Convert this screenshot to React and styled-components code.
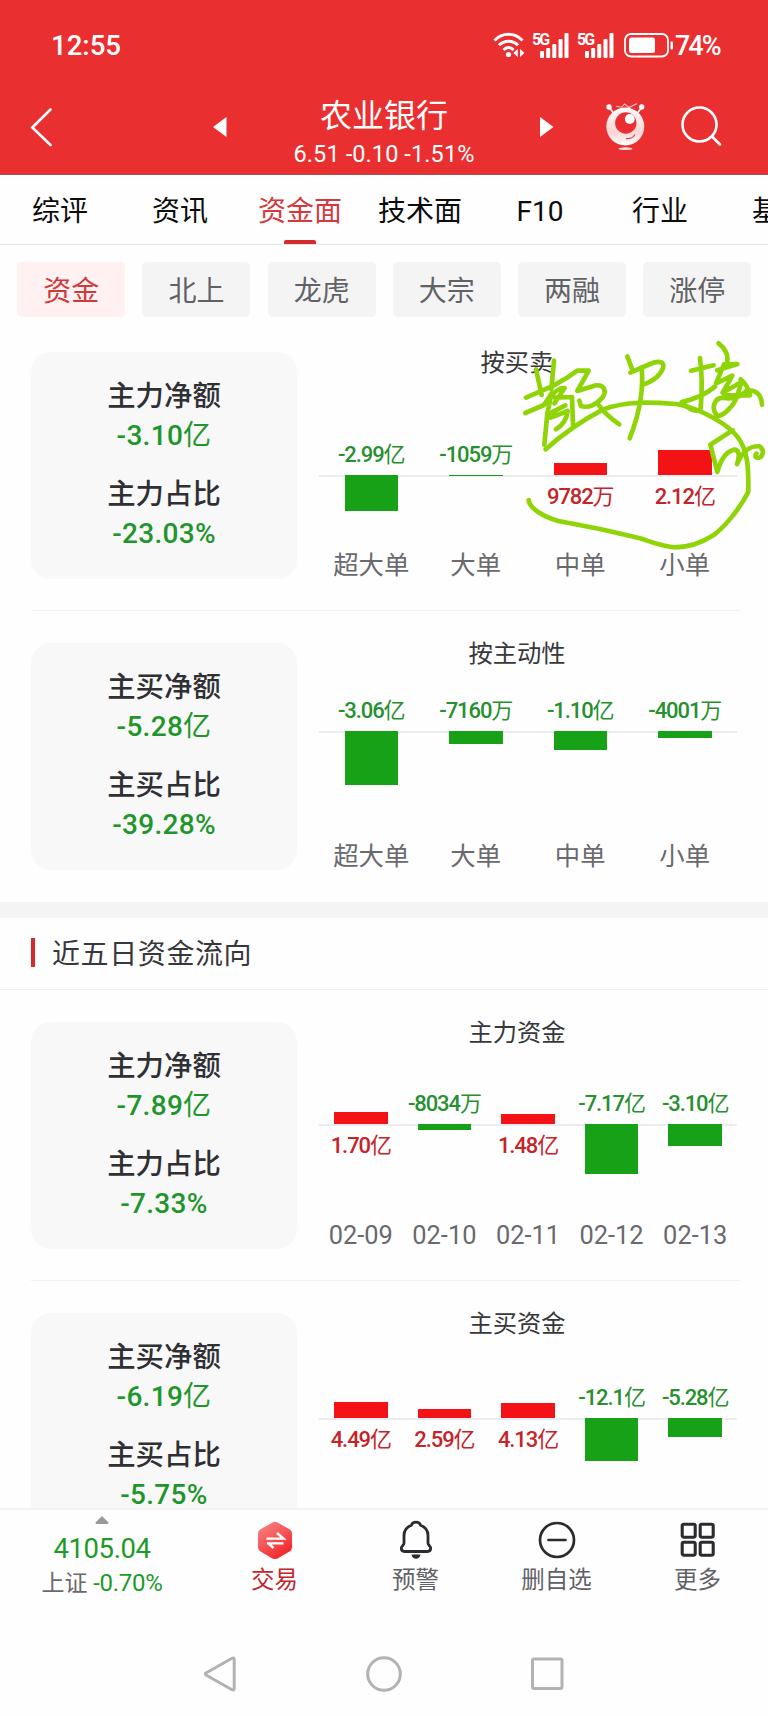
import styled, { createGlobalStyle } from "styled-components";

const tabs = ["综评", "资讯", "资金面", "技术面", "F10", "行业", "基金"];
const chips = ["资金", "北上", "龙虎", "大宗", "两融", "涨停"];

// bar: positive grows up (red), negative grows down (green)
const todayRows = [
  {
    title: "按买卖",
    axis: 155,
    stats: [
      { name: "主力净额", value: "-3.10亿" },
      { name: "主力占比", value: "-23.03%" },
    ],
    items: [
      { label: "超大单", value: "-2.99亿", bar: -36 },
      { label: "大单", value: "-1059万", bar: -1 },
      { label: "中单", value: "9782万", bar: 12 },
      { label: "小单", value: "2.12亿", bar: 25 },
    ],
    note: true,
  },
  {
    title: "按主动性",
    axis: 120,
    stats: [
      { name: "主买净额", value: "-5.28亿" },
      { name: "主买占比", value: "-39.28%" },
    ],
    items: [
      { label: "超大单", value: "-3.06亿", bar: -54 },
      { label: "大单", value: "-7160万", bar: -13 },
      { label: "中单", value: "-1.10亿", bar: -19 },
      { label: "小单", value: "-4001万", bar: -7 },
    ],
  },
];

const fiveDayRows = [
  {
    title: "主力资金",
    axis: 134,
    stats: [
      { name: "主力净额", value: "-7.89亿" },
      { name: "主力占比", value: "-7.33%" },
    ],
    items: [
      { label: "02-09", value: "1.70亿", bar: 12 },
      { label: "02-10", value: "-8034万", bar: -6 },
      { label: "02-11", value: "1.48亿", bar: 10 },
      { label: "02-12", value: "-7.17亿", bar: -50 },
      { label: "02-13", value: "-3.10亿", bar: -22 },
    ],
  },
  {
    title: "主买资金",
    axis: 137,
    stats: [
      { name: "主买净额", value: "-6.19亿" },
      { name: "主买占比", value: "-5.75%" },
    ],
    items: [
      { label: "02-09", value: "4.49亿", bar: 16 },
      { label: "02-10", value: "2.59亿", bar: 9 },
      { label: "02-11", value: "4.13亿", bar: 15 },
      { label: "02-12", value: "-12.1亿", bar: -43 },
      { label: "02-13", value: "-5.28亿", bar: -19 },
    ],
  },
];

const Wifi = () => (
  <svg width="32" height="26" viewBox="0 0 32 26" fill="none" stroke="#fff" strokeWidth="3">
    <path d="M1.500 8.500C9 .3 22 .3 29.500 8.500" />
    <path d="M6 13.200C11 7.800 20 7.800 25 13.200" />
    <path d="M10.500 18C13.500 14.800 17.500 14.800 20.500 18" />
    <circle cx="15.500" cy="22.500" r="2.600" fill="#fff" stroke="none" />
    <path d="M24.800 17v8l-4.500-4zM27 25v-8l4.500 4z" fill="#fff" stroke="none" />
  </svg>
);

const Signal = () => (
  <SignalBox>
    <span>5G</span>
    <svg width="29" height="25" viewBox="0 0 29 25" fill="#fff">
      <rect x="0" y="18" width="4" height="7" rx="1" />
      <rect x="6.200" y="15" width="4" height="10" rx="1" />
      <rect x="12.300" y="11" width="4" height="14" rx="1" />
      <rect x="18.500" y="6" width="4" height="19" rx="1" />
      <rect x="24.500" y="0" width="4" height="25" rx="1" />
    </svg>
  </SignalBox>
);

const Battery = () => (
  <svg width="50" height="25" viewBox="0 0 50 25" fill="none">
    <rect x="1" y="1" width="43" height="22.500" rx="6" stroke="#fff" strokeWidth="1.800" />
    <rect x="5" y="4.500" width="26" height="15.500" rx="2.500" fill="#fff" />
    <rect x="46.500" y="8.500" width="2.500" height="8" rx="1" fill="#fff" />
  </svg>
);

const Robot = () => (
  <svg width="40" height="49" viewBox="0 0 40 49" fill="none">
    <defs>
      <linearGradient id="face" x1="0" y1="0" x2="0" y2="1">
        <stop offset="0" stopColor="#fff" />
        <stop offset=".65" stopColor="#fbd3d3" />
        <stop offset="1" stopColor="#fff" />
      </linearGradient>
    </defs>
    <path d="M3.500 5.500l5 7M35.500 5.500l-5 7" stroke="#fff" strokeWidth="1.600" />
    <circle cx="3" cy="5" r="2.700" fill="#fff" />
    <circle cx="35.700" cy="5" r="2.700" fill="#fff" />
    <path d="M10 4.500l6 .5 2.500-3 4.500 3.500 8-4" stroke="#fbc4c4" strokeWidth="1.100" />
    <circle cx="19.300" cy="24.500" r="19" fill="url(#face)" />
    <circle cx="19.800" cy="21" r="10.700" fill="#e92f32" />
    <circle cx="23.800" cy="17" r="4.900" fill="#fff" />
    <path d="M20 36.500q6 1 9-4" stroke="#b45a5c" strokeWidth="1.300" />
    <ellipse cx="19.500" cy="46.700" rx="7" ry="1.400" fill="#fbdada" />
  </svg>
);

const Scribble = () => (
  <NoteLayer viewBox="0 0 804 780">
    <path d="M108 118L125 195M162 92L154 178M78 203C130 180 175 165 232 122L266 122L232 183L288 166C315 163 319 186 308 202C290 224 265 235 243 228L238 212M290 218C310 245 335 268 358 283" />
    <path d="M76 249L132 225L155 190L142 250L133 344M134 222C155 192 175 172 194 174L163 220M165 203L216 201L219 285M150 250L196 226M152 263L203 243C200 268 188 286 168 298" />
    <path d="M382 79L399 124M391 128L450 102C478 90 495 96 489 114C480 140 455 155 429 164M425 112C432 190 415 260 389 325" />
    <path d="M600 84C606 130 607 180 602 235M573 122L641 106M545 216C575 210 615 195 645 170M546 218C568 235 585 250 601 238" />
    <path d="M656 40C678 58 686 78 681 99M652 121L712 102L672 103L648 160L697 137L668 188L724 156L712 198C700 230 670 258 652 258C632 235 642 205 668 203C710 212 735 190 742 178M722 148C736 160 746 176 750 196L676 196M742 183C768 178 785 195 786 224" />
    <path d="M698 301L631 344L652 426C662 388 680 365 701 359C718 358 720 378 711 402C728 365 747 347 779 349C795 360 789 381 775 384C764 384 765 375 769 371" />
    <path d="M137 358C190 310 250 270 308 239C380 211 460 217 530 222C610 238 685 285 712 320C748 365 745 430 745 485C718 540 670 594 640 616C595 645 555 652 525 652C490 651 455 636 420 625L300 597L175 573C130 560 88 535 86 510" />
  </NoteLayer>
);

const TradeIcon = () => (
  <svg width="36" height="39" viewBox="0 0 36 39" fill="none">
    <defs>
      <linearGradient id="hex" x1="0" y1="0" x2=".6" y2="1">
        <stop offset="0" stopColor="#f98a8a" />
        <stop offset="1" stopColor="#f2282c" />
      </linearGradient>
    </defs>
    <path d="M15.500 1.500q2.500-1.300 5 0l12 6.700q2.500 1.400 2.500 4v14q0 2.800-2.500 4.200l-12 7q-2.500 1.400-5 0l-12-7Q1 29 1 26.200v-14q0-2.600 2.500-4z" fill="url(#hex)" />
    <path d="M9.500 17.600H26.500L20 12M26.500 22.400H10M16.500 27l-5-4.600" stroke="#fff" strokeWidth="2.400" />
  </svg>
);

const BellIcon = () => (
  <svg width="34" height="40" viewBox="0 0 34 40" fill="none">
    <path d="M17 2.200c-2.500 0-4 1.200-4.600 3C7.500 7 5 11 5 15.500v7.800c0 2-2.700 2.500-2.700 5 0 2.100 1.400 3.200 3.200 3.200h23c1.800 0 3.200-1.100 3.200-3.200 0-2.500-2.700-3-2.700-5v-7.800c0-4.500-2.500-8.500-7.400-10.300-.6-1.800-2.100-3-4.600-3z" stroke="#2b2b2f" strokeWidth="2.800" />
    <path d="M12.500 34.500h9q-1 4.300-4.500 4.300t-4.500-4.300z" fill="#2b2b2f" />
  </svg>
);

const RemoveIcon = () => (
  <svg width="38" height="38" viewBox="0 0 38 38" fill="none" stroke="#2b2b2f" strokeWidth="2.700">
    <circle cx="19" cy="19" r="17" />
    <path d="M10.500 19h17" strokeLinecap="round" />
  </svg>
);

const MoreIcon = () => (
  <svg width="36" height="36" viewBox="0 0 36 36" fill="none" stroke="#2b2b2f" strokeWidth="3.100">
    <rect x="2.200" y="2.200" width="13" height="13" rx="1.600" />
    <rect x="20.200" y="2.200" width="13" height="13" rx="1.600" />
    <rect x="2.200" y="20.200" width="13" height="13" rx="1.600" />
    <rect x="20.200" y="20.200" width="13" height="13" rx="1.600" />
  </svg>
);

// 亿 / 万 are set lighter than the digits
const Amount = ({ text }) => {
  const unit = /[亿万]$/.test(text) ? text.slice(-1) : "";
  return (
    <>
      {unit ? text.slice(0, -1) : text}
      {unit && <Unit>{unit}</Unit>}
    </>
  );
};

const FundRow = ({ row, divider }) => (
  <Row $divider={divider}>
    <Card>
      {row.stats.map((s) => (
        <Stat key={s.name}>
          <span>{s.name}</span>
          <b>
            <Amount text={s.value} />
          </b>
        </Stat>
      ))}
    </Card>
    <ChartBox>
      <ChartTitle>{row.title}</ChartTitle>
      <Plot>
        {row.items.map((item) => {
          const up = item.bar > 0;
          const bar = <Bar $up={up} style={{ height: Math.abs(item.bar) }} />;
          const value = (
            <Value $up={up}>
              <Amount text={item.value} />
            </Value>
          );
          return (
            <Column key={item.label}>
              <Above $axis={row.axis}>{up ? bar : value}</Above>
              <Below $axis={row.axis}>{up ? value : bar}</Below>
              <ColumnLabel>{item.label}</ColumnLabel>
            </Column>
          );
        })}
      </Plot>
    </ChartBox>
    {row.note && <Scribble />}
  </Row>
);

export default function App() {
  return (
    <Screen>
      <GlobalStyle />
      <Header>
        <StatusBar>
          <Clock>12:55</Clock>
          <StatusIcons>
            <Wifi />
            <Signal />
            <Signal />
            <Battery />
            <Percent>74%</Percent>
          </StatusIcons>
        </StatusBar>
        <NavBar>
          <BackButton>
            <svg width="22" height="40" viewBox="0 0 22 40" fill="none" stroke="#fff" strokeWidth="2.600" strokeLinecap="round">
              <path d="M20.500 2.500L2.300 20.500l18.200 17.500" />
            </svg>
          </BackButton>
          <Prev>
            <svg width="14" height="20" viewBox="0 0 14 20" fill="#fff">
              <path d="M13.500 0v20L0 10z" />
            </svg>
          </Prev>
          <StockTitle>
            <h1>农业银行</h1>
            <p>6.51 -0.10 -1.51%</p>
          </StockTitle>
          <Next>
            <svg width="14" height="20" viewBox="0 0 14 20" fill="#fff">
              <path d="M0 0v20l13.500-10z" />
            </svg>
          </Next>
          <Assistant>
            <Robot />
          </Assistant>
          <Search>
            <svg width="41" height="41" viewBox="0 0 41 41" fill="none" stroke="#fff" strokeWidth="2.600" strokeLinecap="round">
              <circle cx="18.500" cy="18.500" r="17" />
              <path d="M31 30.500l8 8" />
            </svg>
          </Search>
        </NavBar>
      </Header>
      <Tabs>
        {tabs.map((t) => (
          <Tab key={t} $active={t === "资金面"}>
            {t}
          </Tab>
        ))}
      </Tabs>
      <Chips>
        {chips.map((c) => (
          <Chip key={c} $active={c === "资金"}>
            {c}
          </Chip>
        ))}
      </Chips>
      <Content>
        {todayRows.map((row, i) => (
          <FundRow key={row.title} row={row} divider={i === 0} />
        ))}
        <Gap />
        <SectionTitle>近五日资金流向</SectionTitle>
        {fiveDayRows.map((row, i) => (
          <FundRow key={row.title} row={row} divider={i === 0} />
        ))}
      </Content>
      <BottomBar>
        <IndexInfo>
          <svg width="14" height="8" viewBox="0 0 14 8" fill="#999">
            <path d="M7 0l6.500 6.500q0 1.500-1.500 1.500h-10q-1.500 0-1.500-1.500z" />
          </svg>
          <strong>4105.04</strong>
          <p>
            上证 <em>-0.70%</em>
          </p>
        </IndexInfo>
        <Action $active>
          <i><TradeIcon /></i>
          交易
        </Action>
        <Action>
          <i><BellIcon /></i>
          预警
        </Action>
        <Action>
          <i><RemoveIcon /></i>
          删自选
        </Action>
        <Action>
          <i><MoreIcon /></i>
          更多
        </Action>
      </BottomBar>
      <SystemNav>
        <svg width="34" height="38" viewBox="0 0 34 38">
          <path d="M29 3.300q2.200-1 2.200 1.200v29q0 2.200-2.200 1.200L3 20q-1.500-1 0-2z" />
        </svg>
        <svg width="38" height="38" viewBox="0 0 38 38">
          <circle cx="19" cy="19" r="16.300" />
        </svg>
        <svg width="34" height="38" viewBox="0 0 34 38">
          <rect x="1.500" y="4" width="29.500" height="29.500" rx="1.500" />
        </svg>
      </SystemNav>
    </Screen>
  );
}

const GlobalStyle = createGlobalStyle`
  * {
    box-sizing: border-box;
  }
  body {
    margin: 0;
    background: #fefefe;
    font-family: Roboto, "Noto Sans CJK SC", sans-serif;
  }
  h1, p {
    margin: 0;
    font-weight: 400;
  }
  svg {
    display: block;
    flex-shrink: 0;
  }
`;
const Screen = styled.div`
  display: flex;
  flex-direction: column;
  width: 768px;
  height: 1716px;
  overflow: hidden;
  background: #fefefe;
`;
const Header = styled.header`
  height: 175px;
  flex-shrink: 0;
  background: #ea2f31;
  border-bottom: 1px solid #a4524d;
  color: #fff;
`;
const StatusBar = styled.div`
  display: flex;
  align-items: center;
  justify-content: space-between;
  height: 90px;
  padding: 0 47px 0 51px;
`;
const Clock = styled.span`
  font-size: 27.600px;
  font-weight: 500;
  line-height: 34px;
  padding-top: 2px;
`;
const StatusIcons = styled.div`
  display: flex;
  align-items: center;
`;
const Percent = styled.span`
  width: 46px;
  margin-left: 1px;
  padding-top: 2px;
  font-size: 27px;
  font-weight: 500;
  letter-spacing: -2px;
  white-space: nowrap;
`;
const SignalBox = styled.div`
  display: flex;
  margin-left: 7px;
  margin-right: 1px;
  width: 37px;
  span {
    width: 8px;
    font-size: 16px;
    font-weight: 700;
    line-height: 14px;
    letter-spacing: -2px;
    white-space: nowrap;
  }
  & + svg {
    margin-left: 9px;
  }
`;
const NavBar = styled.div`
  display: flex;
  align-items: center;
  height: 84px;
  padding-left: 30px;
`;
const NavItem = styled.div`
  margin-bottom: 11px;
`;
const BackButton = styled(NavItem)`
  width: 22px;
`;
const Prev = styled(NavItem)`
  margin-left: 161px;
`;
const Next = styled(NavItem)`
  margin-left: 56px;
`;
const Assistant = styled(NavItem)`
  margin-left: 52px;
`;
const Search = styled(NavItem)`
  margin-left: 35px;
`;
const StockTitle = styled.div`
  width: 200px;
  margin-left: 57px;
  padding-top: 4px;
  text-align: center;
  h1 {
    font-size: 32px;
    line-height: 40px;
  }
  p {
    font-size: 23.500px;
    line-height: 36px;
    letter-spacing: 0.100px;
    white-space: nowrap;
  }
`;
const Tabs = styled.nav`
  display: flex;
  height: 70px;
  flex-shrink: 0;
  overflow: hidden;
  border-bottom: 1px solid #e4e4e6;
`;
const Tab = styled.div`
  display: flex;
  flex-direction: column;
  align-items: center;
  width: 120px;
  flex-shrink: 0;
  font-size: 28px;
  line-height: 66px;
  padding-top: 4px;
  color: ${(p) => (p.$active ? "#d23a3c" : "#0c0c0c")};
  &::after {
    content: "";
    width: 32px;
    height: 4px;
    margin-top: -5px;
    flex-shrink: 0;
    border-radius: 2px 2px 0 0;
    background: ${(p) => (p.$active ? "#d6292e" : "transparent")};
  }
`;
const Chips = styled.div`
  display: flex;
  gap: 17.200px;
  height: 75px;
  flex-shrink: 0;
  padding: 16.500px 0 0 17.300px;
`;
const Chip = styled.div`
  width: 108px;
  height: 55px;
  padding-top: 2px;
  border-radius: 5px;
  text-align: center;
  font-size: 28px;
  line-height: 56px;
  color: ${(p) => (p.$active ? "#cf3a3d" : "#626266")};
  background: ${(p) => (p.$active ? "#fff0f1" : "#f4f4f5")};
`;
const Content = styled.main`
  flex: 1;
  min-height: 0;
  overflow: hidden;
`;
const Row = styled.section`
  position: relative;
  display: flex;
  height: 291px;
  padding: 32px 31px 0;
  &::after {
    content: "";
    display: ${(p) => (p.$divider ? "block" : "none")};
    align-self: flex-end;
    flex-shrink: 0;
    width: 709px;
    height: 1px;
    margin-left: -706px;
    background: #f1f1f2;
  }
`;
const Card = styled.div`
  display: flex;
  flex-direction: column;
  flex-shrink: 0;
  gap: 20px;
  width: 266px;
  height: 227px;
  padding-top: 25px;
  border-radius: 20px;
  background: #f8f8f9;
`;
const Stat = styled.div`
  display: flex;
  flex-direction: column;
  align-items: center;
  font-size: 28.400px;
  font-weight: 500;
  line-height: 39px;
  color: #303034;
  b {
    font-size: 28px;
    font-weight: 500;
    letter-spacing: 0.300px;
    color: #1f962b;
  }
`;
const ChartBox = styled.div`
  width: 440px;
  flex-shrink: 0;
  margin-top: -4px;
`;
const ChartTitle = styled.div`
  font-size: 24.300px;
  line-height: 30px;
  text-align: center;
  color: #38383c;
`;
const Plot = styled.div`
  display: flex;
  margin-left: 22px;
`;
const Column = styled.div`
  flex: 1;
  display: flex;
  flex-direction: column;
`;
const Above = styled.div`
  display: flex;
  flex-direction: column;
  justify-content: flex-end;
  align-items: center;
  height: ${(p) => p.$axis - 58}px;
`;
const Below = styled.div`
  display: flex;
  flex-direction: column;
  align-items: center;
  height: ${(p) => 230 - p.$axis}px;
  background: linear-gradient(#ececf0, #ececf0) top / 100% 2px no-repeat;
`;
const Bar = styled.div`
  width: 53.500px;
  background: ${(p) => (p.$up ? "#f31317" : "#16a116")};
`;
const Value = styled.span`
  margin: 9px 0 8px;
  font-size: 22px;
  font-weight: 500;
  line-height: 25px;
  letter-spacing: -1.100px;
  white-space: nowrap;
  color: ${(p) => (p.$up ? "#c4242a" : "#27902f")};
`;
const Unit = styled.span`
  font-weight: 400;
`;
const ColumnLabel = styled.span`
  text-align: center;
  font-size: 25.400px;
  line-height: 31px;
  white-space: nowrap;
  color: #69696e;
`;
const NoteLayer = styled.svg`
  position: absolute;
  left: 500px;
  top: 10px;
  width: 268px;
  height: 260px;
  fill: none;
  stroke: #8fd406;
  stroke-width: 14;
  stroke-linecap: round;
  stroke-linejoin: round;
`;
const Gap = styled.div`
  height: 16px;
  background: #f4f4f5;
`;
const SectionTitle = styled.div`
  display: flex;
  align-items: center;
  height: 72px;
  padding: 0 0 3px 31px;
  border-bottom: 1px solid #eeeef0;
  font-size: 28px;
  letter-spacing: 0.600px;
  color: #38383c;
  &::before {
    content: "";
    width: 4px;
    height: 29px;
    margin-right: 17px;
    background: #d6292e;
  }
`;
const BottomBar = styled.div`
  display: flex;
  height: 122px;
  flex-shrink: 0;
  border-top: 2px solid #f2f2f3;
`;
const IndexInfo = styled.div`
  display: flex;
  flex-direction: column;
  align-items: center;
  width: 204px;
  padding-top: 6px;
  strong {
    margin-top: 8px;
    font-size: 27.500px;
    font-weight: 400;
    line-height: 34px;
    letter-spacing: -0.400px;
    color: #1d9a28;
  }
  p {
    font-size: 23px;
    line-height: 34px;
    color: #69696e;
  }
  em {
    font-size: 24px;
    font-style: normal;
    letter-spacing: -0.300px;
    color: #1d9a28;
  }
`;
const Action = styled.div`
  width: 141px;
  padding-top: 9px;
  text-align: center;
  font-size: 23.500px;
  line-height: 32px;
  color: ${(p) => (p.$active ? "#c0282d" : "#626266")};
  i {
    display: flex;
    align-items: center;
    justify-content: center;
    height: 42px;
    margin-bottom: 3px;
  }
`;
const SystemNav = styled.div`
  display: flex;
  align-items: center;
  justify-content: space-between;
  height: 86px;
  flex-shrink: 0;
  padding: 3px 203px 2px 203px;
  svg {
    fill: none;
    stroke: #b2b2b2;
    stroke-width: 3;
  }
`;
